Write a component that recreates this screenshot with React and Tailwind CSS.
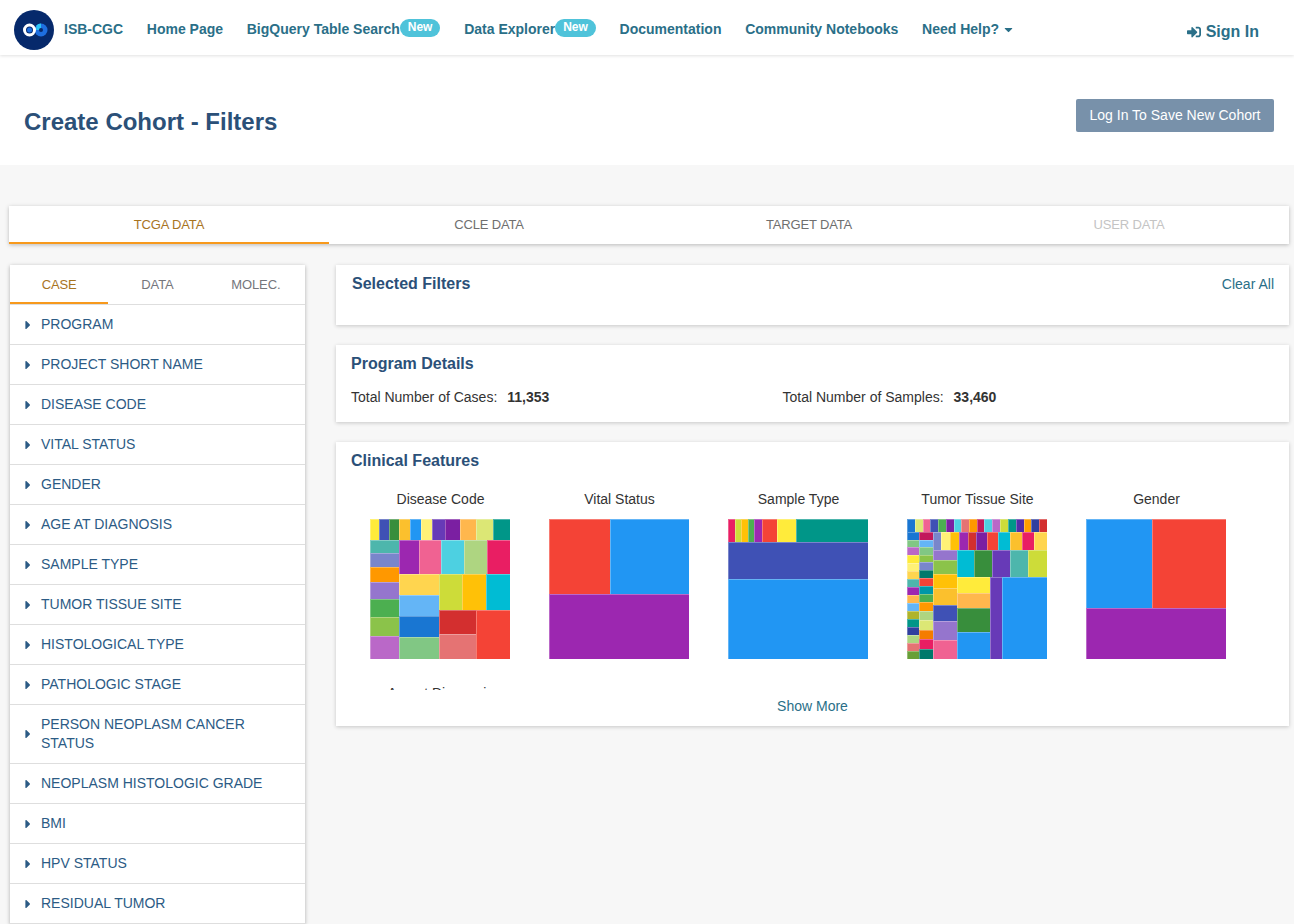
import React from 'react';
import { FaSignInAlt, FaCaretDown, FaCaretRight } from 'react-icons/fa';

// treemap cells are [x0, y0, x1, y1, colour] on a 420 unit square (3x the drawn size)
const col = (x0, x1, stops) =>
  stops.slice(0, -1).map(([y, c], i) => [x0, y, x1, stops[i + 1][0], c]);
const row = (y0, y1, stops) =>
  stops.slice(0, -1).map(([x, c], i) => [x, y0, stops[i + 1][0], y1, c]);

const diseaseCode = [
  ...row(0, 64, [[0, '#ffeb3b'], [28, '#3f51b5'], [58, '#388e3c'], [87, '#fbc02d'], [120, '#2196f3'], [153, '#fff176'], [187, '#673ab7'], [226, '#7b1fa2'], [270, '#ffb74d'], [317, '#dce775'], [369, '#009688'], [420]]),
  ...col(0, 88, [[64, '#4db6ac'], [102, '#7986cb'], [143, '#ff9800'], [189, '#9575cd'], [240, '#4caf50'], [295, '#8bc34a'], [351, '#ba68c8'], [420]]),
  ...row(64, 165, [[88, '#9c27b0'], [148, '#f06292'], [214, '#4dd0e1'], [282, '#aed581'], [352, '#e91e63'], [420]]),
  ...col(88, 206, [[165, '#ffd54f'], [227, '#64b5f6'], [291, '#1976d2'], [355, '#81c784'], [420]]),
  ...row(165, 273, [[206, '#cddc39'], [277, '#ffc107'], [348, '#00bcd4'], [420]]),
  ...col(206, 319, [[273, '#d32f2f'], [344, '#e57373'], [420]]),
  [319, 273, 420, 420, '#f44336'],
];

const vitalStatus = [
  [0, 0, 184, 224, '#f44336'],
  [184, 0, 420, 224, '#2196f3'],
  [0, 224, 420, 420, '#9c27b0'],
];

const sampleType = [
  ...row(0, 69, [[0, '#e91e63'], [20, '#cddc39'], [40, '#ffc107'], [59, '#4caf50'], [79, '#9c27b0'], [102, '#f44336'], [147, '#ffeb3b'], [205, '#009688'], [420]]),
  [0, 69, 420, 180, '#3f51b5'],
  [0, 180, 420, 420, '#2196f3'],
];

const tumorSite = [
  ...row(0, 38, [[0, '#1976d2'], [24, '#dce775'], [47, '#f06292'], [70, '#3f51b5'], [93, '#4caf50'], [116, '#7b1fa2'], [140, '#4dd0e1'], [163, '#e57373'], [186, '#ff9800'], [209, '#c2185b'], [232, '#4dd0e1'], [256, '#ba68c8'], [279, '#cddc39'], [303, '#009688'], [327, '#512da8'], [350, '#ffa000'], [373, '#303f9f'], [396, '#d32f2f'], [420]]),
  ...col(0, 37, [[38, '#1976d2'], [62, '#81c784'], [85, '#ba68c8'], [109, '#ffeb3b'], [131, '#fff176'], [157, '#ffd54f'], [180, '#4db6ac'], [204, '#9c27b0'], [227, '#ffb74d'], [252, '#64b5f6'], [277, '#afb42b'], [301, '#009688'], [324, '#303f9f'], [349, '#aed581'], [373, '#e57373'], [396, '#689f38'], [420]]),
  ...col(37, 78, [[38, '#c2185b'], [62, '#64b5f6'], [85, '#81c784'], [107, '#8bc34a'], [130, '#7986cb'], [154, '#00796b'], [177, '#f44336'], [201, '#0097a7'], [225, '#4caf50'], [250, '#ff9800'], [277, '#aed581'], [304, '#dce775'], [332, '#f57c00'], [361, '#e91e63'], [390, '#00796b'], [420]]),
  ...row(38, 94, [[78, '#7986cb'], [102, '#fff176'], [128, '#ffc107'], [155, '#9c27b0'], [182, '#d32f2f'], [208, '#7b1fa2'], [240, '#f44336'], [273, '#00bcd4'], [308, '#fbc02d'], [345, '#e91e63'], [382, '#ffd54f'], [420]]),
  ...col(78, 149, [[94, '#9575cd'], [124, '#8bc34a'], [164, '#ffc107'], [207, '#fbc02d'], [257, '#3f51b5'], [307, '#9575cd'], [363, '#f06292'], [420]]),
  ...row(94, 174, [[149, '#00bcd4'], [201, '#388e3c'], [255, '#673ab7'], [308, '#4db6ac'], [363, '#cddc39'], [420]]),
  ...col(149, 250, [[174, '#ffeb3b'], [221, '#ffb74d'], [268, '#388e3c'], [339, '#2196f3'], [420]]),
  [250, 174, 284, 420, '#673ab7'],
  [284, 174, 420, 420, '#2196f3'],
];

const gender = [
  [0, 0, 198, 267, '#2196f3'],
  [198, 0, 420, 267, '#f44336'],
  [0, 267, 420, 420, '#9c27b0'],
];

const charts = [
  { title: 'Disease Code', cells: diseaseCode },
  { title: 'Vital Status', cells: vitalStatus },
  { title: 'Sample Type', cells: sampleType },
  { title: 'Tumor Tissue Site', cells: tumorSite },
  { title: 'Gender', cells: gender },
  { title: 'Age at Diagnosis', cells: [] },
];

const filters = [
  'PROGRAM',
  'PROJECT SHORT NAME',
  'DISEASE CODE',
  'VITAL STATUS',
  'GENDER',
  'AGE AT DIAGNOSIS',
  'SAMPLE TYPE',
  'TUMOR TISSUE SITE',
  'HISTOLOGICAL TYPE',
  'PATHOLOGIC STAGE',
  'PERSON NEOPLASM CANCER STATUS',
  'NEOPLASM HISTOLOGIC GRADE',
  'BMI',
  'HPV STATUS',
  'RESIDUAL TUMOR',
];

// each cell gets a faint 1px line on its top and left edge only
const Treemap = ({ cells }) => (
  <svg viewBox="0 0 140 140" shapeRendering="crispEdges" className="block h-[140px] w-[140px]">
    {cells.map(([x0, y0, x1, y1, c], i) => {
      const x = Math.round(x0 / 3);
      const y = Math.round(y0 / 3);
      const w = Math.round(x1 / 3) - x;
      const h = Math.round(y1 / 3) - y;
      return (
        <g key={i}>
          <rect x={x} y={y} width={w} height={h} fill={c} />
          <rect x={x} y={y} width={w} height={1} fill="#ffffff" fillOpacity="0.3" />
          <rect x={x} y={y + 1} width={1} height={h - 1} fill="#ffffff" fillOpacity="0.3" />
        </g>
      );
    })}
  </svg>
);

const NewBadge = () => (
  <span className="-mt-[3px] inline-block h-[18px] rounded-full bg-[#4fc3da] px-[8px] text-[12px] leading-[17px] font-bold text-white">New</span>
);

const NavLink = ({ children, badge }) => (
  <a className="flex items-center whitespace-nowrap text-[14px] font-bold text-[#2a6f88]">
    {children}
    {badge && <NewBadge />}
  </a>
);

const Navbar = () => (
  <nav className="relative z-10 box-border flex h-[55px] items-center bg-white pt-[4px] pl-[14px] shadow-[0_1px_3px_rgba(0,0,0,0.12)]">
    <svg viewBox="0 0 40 40" className="mr-[10px] h-[40px] w-[40px] shrink-0">
      <circle cx="20" cy="20" r="20" fill="#06296b" />
      <circle cx="27" cy="20" r="6.5" fill="#1e6fe0" />
      <path d="M22.5 15.3a6.5 6.5 0 0 1 4.5-1.8v4.5a2 2 0 0 0-1.5 2h-3.5z" fill="#29c5f6" />
      <circle cx="27" cy="20" r="2" fill="#06296b" />
      <circle cx="15.5" cy="20" r="5" fill="#06296b" stroke="#ffffff" strokeWidth="3" />
      <circle cx="15.5" cy="20" r="2.5" fill="#1e6fe0" />
    </svg>
    <div className="flex items-center gap-[23.7px]">
      <NavLink>ISB-CGC</NavLink>
      <NavLink>Home Page</NavLink>
      <NavLink badge>BigQuery Table Search</NavLink>
      <NavLink badge>Data Explorer</NavLink>
      <NavLink>Documentation</NavLink>
      <NavLink>Community Notebooks</NavLink>
      <NavLink>
        Need Help?
        <FaCaretDown className="ml-[3px] text-[13px]" />
      </NavLink>
    </div>
    <a className="mt-[5px] mr-[35px] ml-auto flex items-center gap-[5px] text-[16px] font-bold text-[#2a6f88]">
      <FaSignInAlt className="text-[14px]" />
      Sign In
    </a>
  </nav>
);

const Tab = ({ label, active, disabled }) => (
  <div
    className={`flex-1 border-b-2 pt-[2px] text-center text-[13px] leading-[34px] tracking-[-0.15px] ${
      active ? 'border-[#f7991c] text-[#a8741f]' : 'border-transparent'
    } ${disabled ? 'text-[#c4c4c4]' : ''} ${!active && !disabled ? 'text-[#6f6f6f]' : ''}`}
  >
    {label}
  </div>
);

const SideTab = ({ label, active }) => (
  <div
    className={`flex-1 border-b-2 pt-[2px] text-center text-[13px] leading-[35px] tracking-[-0.1px] ${
      active ? 'border-[#f7991c] text-[#a8741f]' : 'border-transparent text-[#75767c]'
    }`}
  >
    {label}
  </div>
);

const Sidebar = () => (
  <aside className="w-[295px] shrink-0 self-start bg-white shadow-[0_1px_4px_rgba(0,0,0,0.3)]">
    <div className="flex h-[40px] border-b border-[#dedede]">
      <SideTab label="CASE" active />
      <SideTab label="DATA" />
      <SideTab label="MOLEC." />
    </div>
    <ul>
      {filters.map((f) => (
        <li key={f} className="flex items-center border-b border-[#dedede] py-[10px] pr-[40px] pl-[15px] text-[14px] leading-[19px] text-[#2c5b85]">
          <FaCaretRight className="mr-[10px] h-[14px] w-[6px] shrink-0" />
          <span>{f}</span>
        </li>
      ))}
    </ul>
  </aside>
);

const Card = ({ className, children }) => (
  <section className={`bg-white shadow-[0_1px_4px_rgba(0,0,0,0.2)] ${className}`}>{children}</section>
);

const Main = () => (
  <div className="flex flex-1 flex-col gap-[20px]">
    <Card className="flex h-[60px] items-start justify-between pt-[9px] pr-[15px] pl-[16px]">
      <h3 className="text-[16px] leading-[20px] font-bold text-[#2b5078]">Selected Filters</h3>
      <a className="pt-[1px] text-[14px] leading-[19px] text-[#2a6f88]">Clear All</a>
    </Card>
    <Card className="h-[77px] px-[15px] pt-[9px]">
      <h3 className="text-[16px] leading-[20px] font-bold text-[#2b5078]">Program Details</h3>
      <div className="mt-[14px] flex text-[14px] leading-[19px] text-[#333333]">
        <div className="flex w-[431.5px] gap-[10px]">
          <span>Total Number of Cases:</span>
          <b>11,353</b>
        </div>
        <div className="flex gap-[10px]">
          <span>Total Number of Samples:</span>
          <b>33,460</b>
        </div>
      </div>
    </Card>
    <Card className="h-[284px] px-[15px] pt-[9px]">
      <h3 className="text-[16px] leading-[20px] font-bold text-[#2b5078]">Clinical Features</h3>
      <div className="mt-[10px] h-[209px] overflow-hidden">
        <div className="grid grid-cols-[repeat(5,179px)] gap-y-[25px] pt-[9px]">
          {charts.map((c) => (
            <div key={c.title} className="w-[179px]">
              <div className="text-center text-[14px] leading-[19px] text-[#333333]">{c.title}</div>
              {c.cells.length > 0 && (
                <div className="mt-[10px] pl-[19px]">
                  <Treemap cells={c.cells} />
                </div>
              )}
            </div>
          ))}
        </div>
      </div>
      <div className="pt-[7px] text-center text-[14px] leading-[19px] text-[#2a6f88]">Show More</div>
    </Card>
  </div>
);

export default function App() {
  return (
    <div className="h-[924px] overflow-hidden bg-[#f7f7f7] font-['Liberation_Sans',Arial,sans-serif]">
      <Navbar />
      <header className="flex h-[110px] items-start justify-between bg-white pr-[20px] pl-[24px]">
        <h1 className="pt-[51px] text-[24px] leading-[32px] font-bold text-[#2b5078]">Create Cohort - Filters</h1>
        <button className="mt-[44px] h-[33px] rounded-[2px] bg-[#7891aa] px-[13.5px] text-[14px] text-white">Log In To Save New Cohort</button>
      </header>
      <div className="mt-[41px] mr-[5px] ml-[9px] flex h-[38px] bg-white shadow-[0_1px_4px_rgba(0,0,0,0.25)]">
        <Tab label="TCGA DATA" active />
        <Tab label="CCLE DATA" />
        <Tab label="TARGET DATA" />
        <Tab label="USER DATA" disabled />
      </div>
      <div className="mt-[21px] mr-[5px] ml-[10px] flex gap-[31px]">
        <Sidebar />
        <Main />
      </div>
    </div>
  );
}
